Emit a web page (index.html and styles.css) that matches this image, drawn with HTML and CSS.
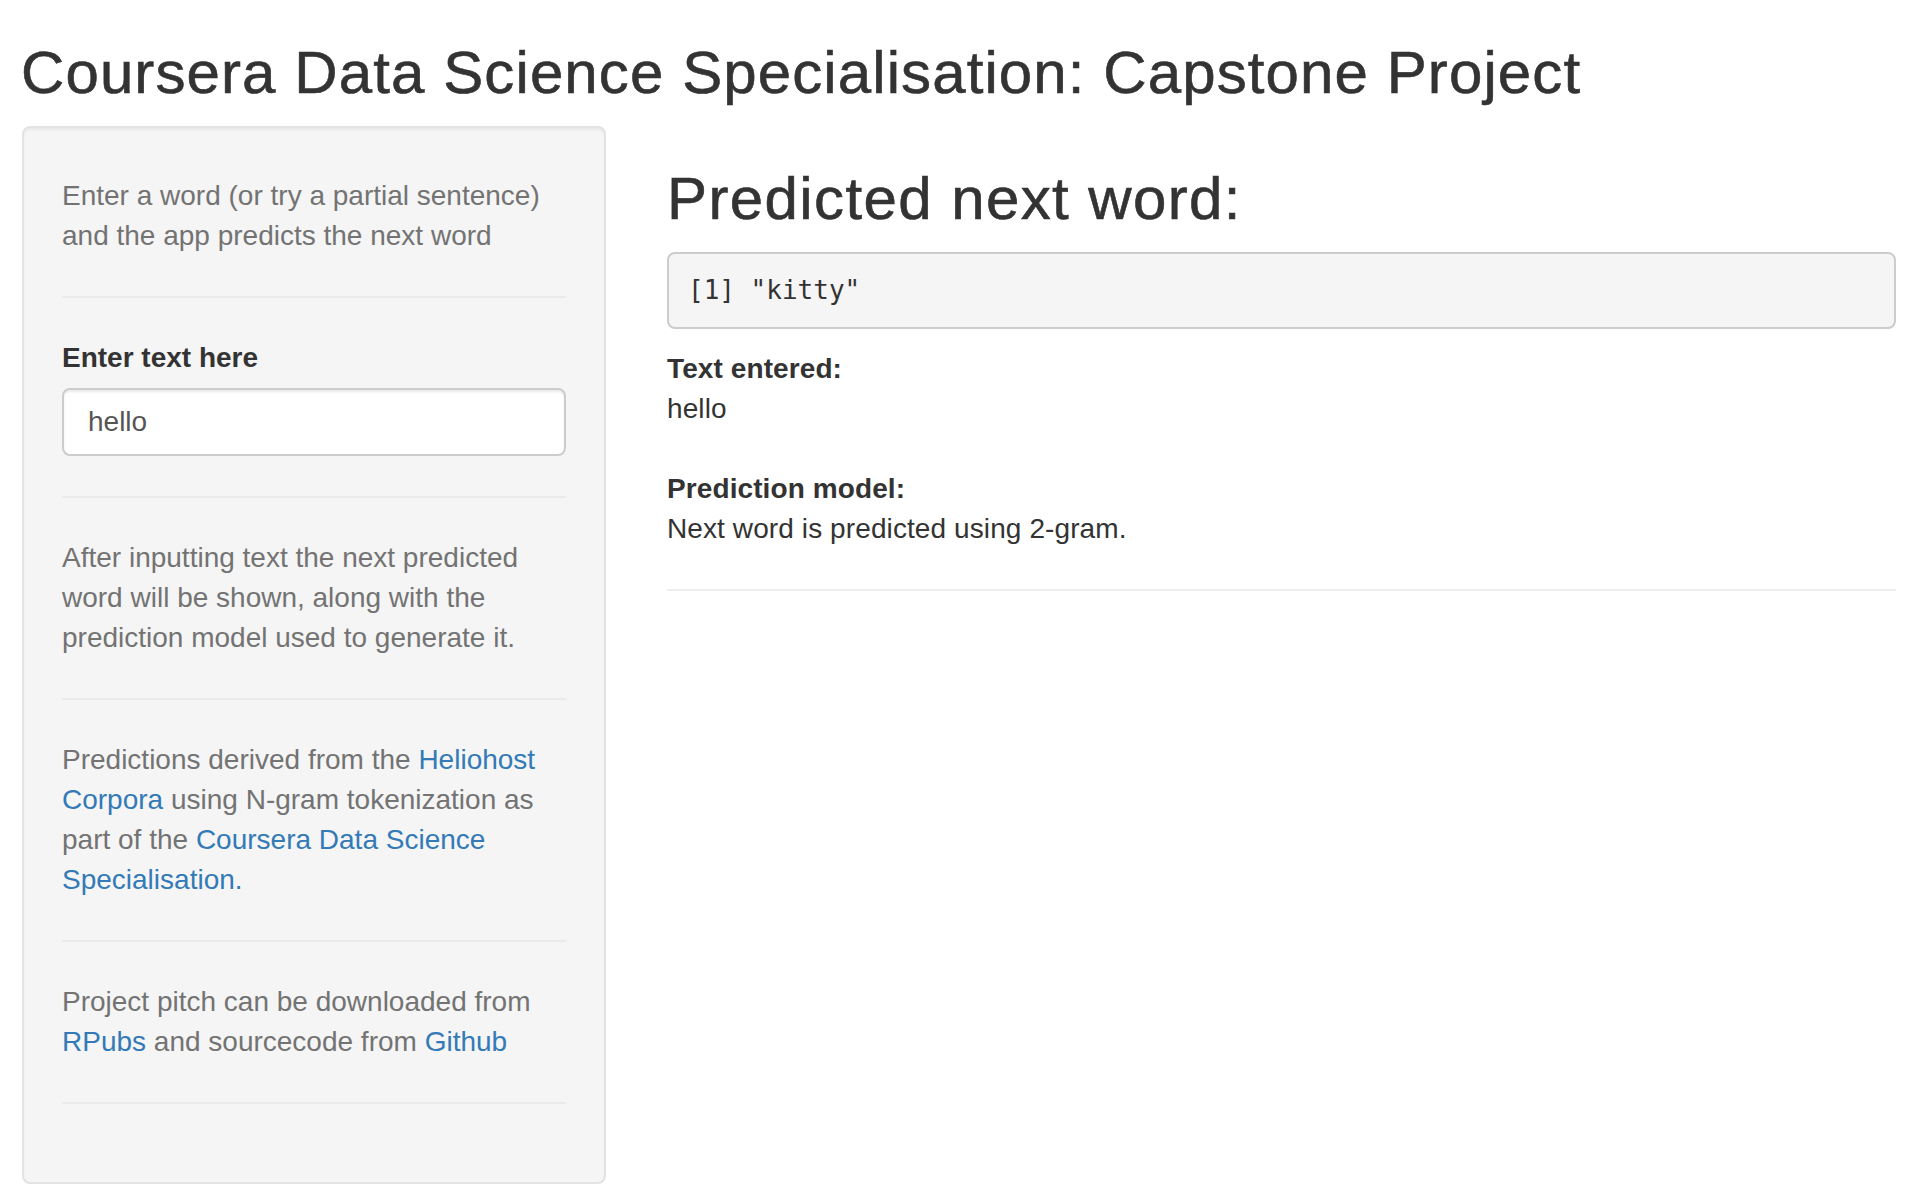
FILE: index.html
```html
<!DOCTYPE html>
<html lang="en">
<head>
<meta charset="utf-8">
<title>Coursera Data Science Specialisation: Capstone Project</title>
<link rel="stylesheet" href="styles.css">
</head>
<body>
<div class="page">
  <h2 class="title">Coursera Data Science Specialisation: Capstone Project</h2>
  <div class="row">
    <aside class="sidebar">
      <span class="help-block first">Enter a word (or try a partial sentence) and the app predicts the next word</span>
      <hr class="rule">
      <div class="form-group">
        <label class="control-label" for="text">Enter text here</label>
        <input id="text" class="form-control" type="text" value="hello">
      </div>
      <hr class="rule">
      <p class="help-text">After inputting text the next predicted word will be shown, along with the prediction model used to generate it.</p>
      <hr class="rule">
      <p class="help-text">Predictions derived from the <a href="#">Heliohost Corpora</a> using N-gram tokenization as part of the <a href="#">Coursera Data Science Specialisation.</a></p>
      <hr class="rule">
      <p class="help-text">Project pitch can be downloaded from <a href="#">RPubs</a> and sourcecode from <a href="#">Github</a></p>
      <hr class="rule last">
    </aside>
    <main class="main">
      <h2 class="main-heading">Predicted next word:</h2>
      <pre class="output">[1] "kitty"</pre>
      <div class="details">
        <span class="out-label">Text entered:</span><br>
        hello<br><br>
        <span class="out-label">Prediction model:</span><br>
        Next word is predicted using 2-gram.
      </div>
      <hr class="rule">
    </main>
  </div>
</div>
</body>
</html>
```
FILE: styles.css
```css
html, body {
  margin: 0;
  padding: 0;
  background: #ffffff;
}

body {
  font-family: "Liberation Sans", Arial, Helvetica, sans-serif;
  font-size: 28px;
  line-height: 40px;
  color: #333333;
}

.page {
  padding: 0 16px 0 22px;
}

.title {
  margin: 40px 0 20px -1px;
  font-size: 60px;
  line-height: 66px;
  font-weight: 500;
  letter-spacing: 1.1px;
  -webkit-text-stroke: 0.6px #333333;
  color: #333333;
}

.row {
  display: flex;
  align-items: flex-start;
  gap: 61px;
}

.sidebar {
  box-sizing: border-box;
  width: 584px;
  flex: none;
  background: #f5f5f5;
  border: 2px solid #e3e3e3;
  border-radius: 8px;
  box-shadow: inset 0 2px 2px rgba(0, 0, 0, 0.05);
  padding: 38px;
}

.help-block {
  display: block;
  color: #737373;
  margin: 10px 0 20px;
}

.help-text {
  color: #737373;
  margin: 0 0 20px;
}

.help-text a {
  color: #337ab7;
  text-decoration: none;
}

.rule {
  margin: 40px 0;
  border: 0;
  border-top: 2px solid #eeeeee;
  height: 0;
}

.sidebar .rule {
  border-top-color: #eaeaea;
}

.form-group {
  margin-bottom: 30px;
}

.control-label {
  display: inline-block;
  font-weight: 700;
  margin-bottom: 10px;
  color: #333333;
}

.form-control {
  display: block;
  box-sizing: border-box;
  width: 100%;
  height: 68px;
  padding: 12px 24px;
  font-family: "Liberation Sans", Arial, Helvetica, sans-serif;
  font-size: 28px;
  line-height: 40px;
  color: #555555;
  background: #ffffff;
  border: 2px solid #cccccc;
  border-radius: 8px;
  box-shadow: inset 0 2px 2px rgba(0, 0, 0, 0.075);
  outline: none;
}

.main {
  flex: 1;
  min-width: 0;
}

.main-heading {
  margin: 40px 0 20px;
  font-size: 60px;
  line-height: 66px;
  font-weight: 500;
  letter-spacing: 1.4px;
  -webkit-text-stroke: 0.6px #333333;
  color: #333333;
}

.output {
  margin: 0 0 20px;
  padding: 18px 19px;
  font-family: "DejaVu Sans Mono", Menlo, Monaco, monospace;
  font-size: 26px;
  line-height: 37px;
  color: #333333;
  background: #f5f5f5;
  border: 2px solid #cccccc;
  border-radius: 8px;
  white-space: pre-wrap;
}

.details {
  letter-spacing: 0.1px;
}

.out-label {
  font-weight: 700;
}
```
